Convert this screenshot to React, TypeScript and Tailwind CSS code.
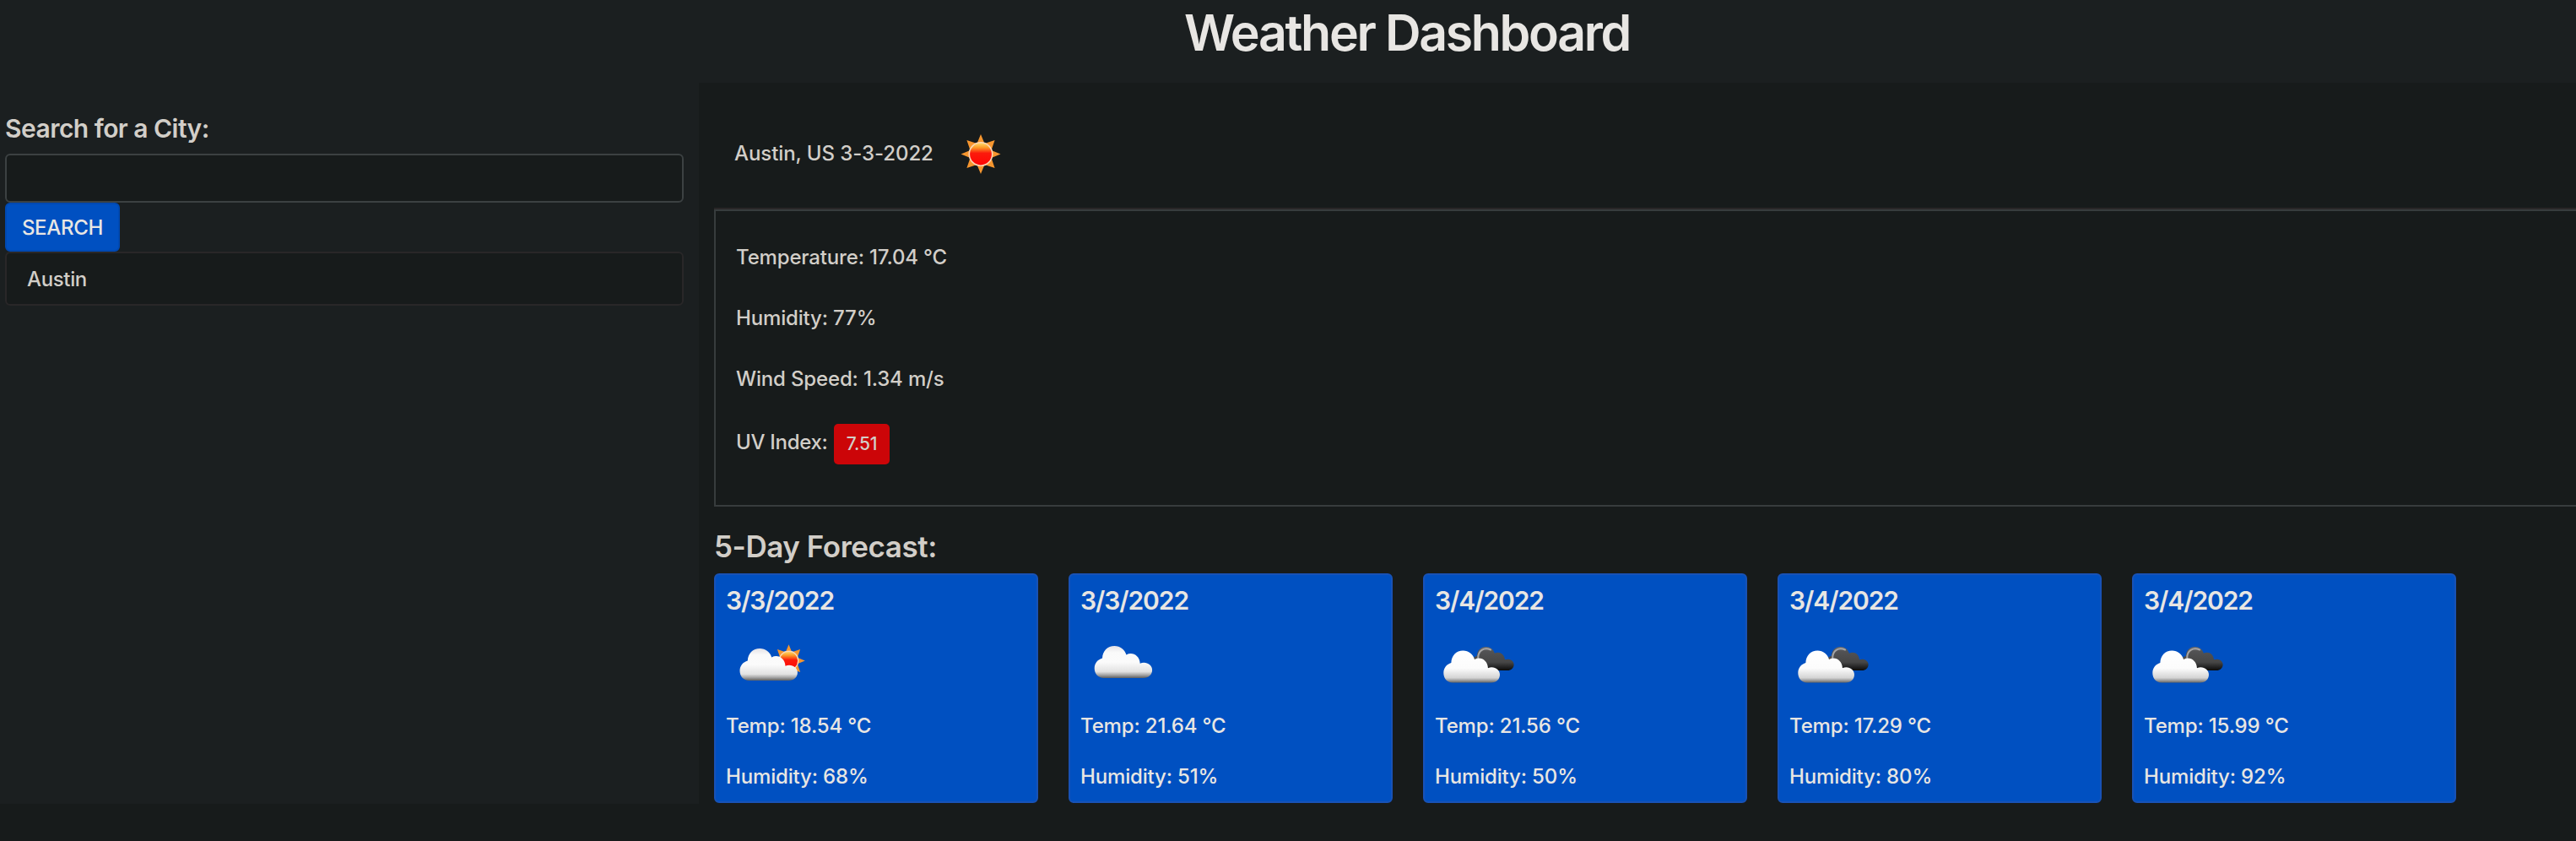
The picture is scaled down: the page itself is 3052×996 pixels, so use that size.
import type { ReactNode } from "react";

type IconKind = "partly" | "cloud" | "broken";

const days: { date: string; icon: IconKind; temp: string; humidity: number }[] = [
  { date: "3/3/2022", icon: "partly", temp: "18.54", humidity: 68 },
  { date: "3/3/2022", icon: "cloud", temp: "21.64", humidity: 51 },
  { date: "3/4/2022", icon: "broken", temp: "21.56", humidity: 50 },
  { date: "3/4/2022", icon: "broken", temp: "17.29", humidity: 80 },
  { date: "3/4/2022", icon: "broken", temp: "15.99", humidity: 92 },
];

const CLOUD =
  "M11 38 C4.5 38 0 33 0 26.500 C0 20.500 4 16 9.300 14.500 C9.500 6 15.500 0 23.700 0 C30.500 0 36 4.500 37.700 10.500 C45 6.500 53.500 11.500 54 20.700 C61 18 68.400 22 68.400 28.500 C68.400 34 64 38 58 38 Z";

const RAYS =
  "M0 -23.500 L4.500 -12.500 L16.600 -16.600 L12.500 -4.500 L23.500 0 L12.500 4.500 L16.600 16.600 L4.500 12.500 L0 23.500 L-4.500 12.500 L-16.600 16.600 L-12.500 4.500 L-23.500 0 L-12.500 -4.500 L-16.600 -16.600 L-4.500 -12.500 Z";

function Gradients() {
  return (
    <svg className="absolute size-0" aria-hidden="true">
      <defs>
        <linearGradient id="white" x1="0" y1="0" x2="0" y2="1">
          <stop offset="0" stopColor="#e4e2e6" />
          <stop offset="0.2" stopColor="#fafafa" />
          <stop offset="0.5" stopColor="#fbfbfb" />
          <stop offset="0.8" stopColor="#e2e2e2" />
          <stop offset="0.9" stopColor="#a8a8a8" />
          <stop offset="1" stopColor="#606060" />
        </linearGradient>
        <linearGradient id="bright" x1="0" y1="0" x2="0" y2="1">
          <stop offset="0" stopColor="#ffffff" />
          <stop offset="0.55" stopColor="#fcfcfc" />
          <stop offset="0.85" stopColor="#d4d4d4" />
          <stop offset="0.93" stopColor="#9c9c9c" />
          <stop offset="1" stopColor="#666666" />
        </linearGradient>
        <linearGradient id="dark" x1="0" y1="0" x2="0" y2="1">
          <stop offset="0" stopColor="#6a6a6c" />
          <stop offset="0.2" stopColor="#525254" />
          <stop offset="0.65" stopColor="#464646" />
          <stop offset="0.9" stopColor="#1b1b1b" />
          <stop offset="1" stopColor="#0a0a0a" />
        </linearGradient>
        <linearGradient id="sun" x1="0" y1="0" x2="0" y2="1">
          <stop offset="0" stopColor="#ffe070" />
          <stop offset="0.22" stopColor="#fb9a28" />
          <stop offset="0.46" stopColor="#fb1a0c" />
          <stop offset="1" stopColor="#ff0505" />
        </linearGradient>
      </defs>
    </svg>
  );
}

function SunShape() {
  return (
    <>
      <path d={RAYS} fill="#f6962f" />
      <circle r="13.700" fill="url(#sun)" stroke="#fbd6b4" strokeWidth="1.600" />
    </>
  );
}

function SunIcon() {
  return (
    <svg className="block size-[75px]" viewBox="0 0 75 75" aria-hidden="true">
      <g transform="translate(37 37.5)">
        <SunShape />
      </g>
    </svg>
  );
}

function CloudIcon({ kind }: { kind: IconKind }) {
  return (
    <svg className="block h-[113px] w-[100px]" viewBox="0 0 100 113" aria-hidden="true">
      {kind === "partly" && (
        <>
          <g transform="translate(74.5 53.5) scale(0.82)">
            <SunShape />
          </g>
          <path d={CLOUD} transform="translate(16.500 39)" fill="url(#white)" />
        </>
      )}
      {kind === "cloud" && <path d={CLOUD} transform="translate(16.700 36)" fill="url(#white)" />}
      {kind === "broken" && (
        <>
          <path d={CLOUD} transform="translate(43 37) scale(0.74)" fill="url(#dark)" />
          <path
            d="M51.200 50 C51.200 42 58 37 66 40.500"
            fill="none"
            stroke="#a4a4a6"
            strokeWidth="2"
            strokeLinecap="round"
          />
          <path d={CLOUD} transform="translate(10.300 41.500) scale(0.975 1)" fill="url(#bright)" />
        </>
      )}
    </svg>
  );
}

function Reading({ children }: { children: ReactNode }) {
  return <p className="mb-9 leading-9">{children}</p>;
}

export default function App() {
  return (
    <div className="flex h-[996px] w-full flex-col overflow-hidden bg-[#171b1b] font-[Inter,sans-serif] text-[24px] font-[450] leading-9 tracking-[-0.16px] text-[#d2cec8]">
      <Gradients />
      <header className="h-[98px] shrink-0 bg-[#1b1f20] pl-[1403px] pt-[2px]">
        <h1 className="whitespace-nowrap text-[59px] font-[570] leading-[73px] tracking-[-2.35px] text-[#e8e6e3]">
          Weather Dashboard
        </h1>
      </header>
      <div className="flex h-[854px] shrink-0">
        <aside className="w-[828px] shrink-0 bg-[#1b1f20] pl-[6px] pr-[18px] pt-9">
          <h4 className="mb-3 text-[30px] font-[570] leading-9 tracking-[-0.53px]">Search for a City:</h4>
          <input className="block h-[58px] w-full rounded-[6px] border-2 border-[#3c4142] bg-[#171b1b] px-4 outline-none" />
          <button className="block h-[58px] w-[136px] rounded-[6px] border-2 border-[#0049b2] bg-[#0050c1] pt-px tracking-[-0.3px] text-[#e8e6e3]">
            SEARCH
          </button>
          <ul className="h-16 rounded-[6px] border-2 border-[#292728] bg-[#171b1b]">
            <li className="px-6 pt-px leading-[60px] tracking-[-0.35px]">Austin</li>
          </ul>
        </aside>
        <main className="flex min-w-0 flex-1 flex-col pl-[18px]">
          <div className="flex h-[150px] shrink-0 items-center border-b-2 border-[#292728] pl-6 pt-5">
            <span className="w-[255px] tracking-[-0.08px]">Austin, US 3-3-2022</span>
            <SunIcon />
          </div>
          <section className="h-[352px] shrink-0 border-y-2 border-l-2 border-[#373c3d] pl-6 pt-[37px]">
            <Reading>Temperature: 17.04 °C</Reading>
            <Reading>Humidity: 77%</Reading>
            <Reading>Wind Speed: 1.34 m/s</Reading>
            <div className="-mt-px flex">
              <span className="w-[116px] pt-1 tracking-[-0.3px]">UV Index:</span>
              <span className="flex h-12 w-[66px] items-center justify-center rounded-[5px] bg-[#cc0508] text-[21px]">
                7.51
              </span>
            </div>
          </section>
          <h3 className="mb-2 mt-[25px] h-[46px] text-[35px] font-[570] leading-[44px] tracking-[-0.45px]">
            5-Day Forecast:
          </h3>
          <div className="flex gap-9">
            {days.map((d, i) => (
              <article
                key={i}
                className="h-[272px] w-[384px] shrink-0 rounded-[6px] border-2 border-[#1852b6] bg-[#0050c1] pl-3 pt-3 text-[#e8e6e3]"
              >
                <h5 className="text-[30px] font-[570] leading-9 tracking-[-1.1px]">{d.date}</h5>
                <CloudIcon kind={d.icon} />
                <p>Temp: {d.temp} °C</p>
                <p className="mt-6">Humidity: {d.humidity}%</p>
              </article>
            ))}
          </div>
        </main>
      </div>
    </div>
  );
}
